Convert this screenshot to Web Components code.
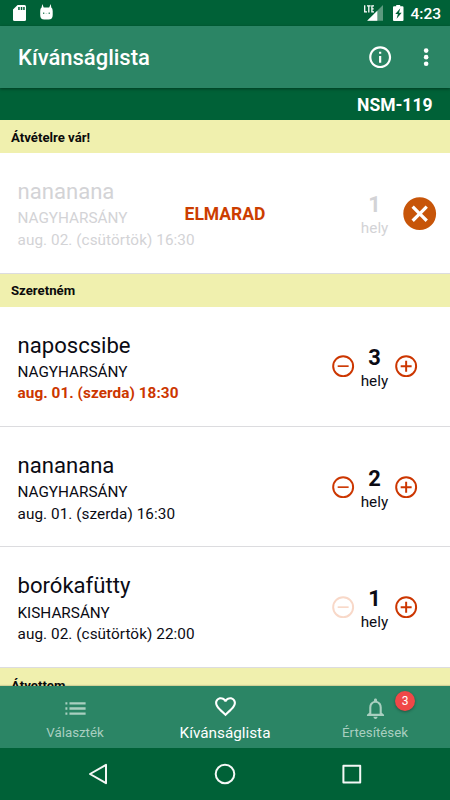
<!DOCTYPE html>
<html lang="hu">
<head>
<meta charset="utf-8">
<title>Kívánságlista</title>
<style>
html, body { margin: 0; height: 100%; }
body { font-family: Roboto, "Liberation Sans", sans-serif; background: #fff; color: #0b0b14; overflow: hidden; }
</style>
</head>
<body>
<wish-app></wish-app>
<script>
const define = (name, html, setup) => {
  const tpl = document.createElement('template');
  tpl.innerHTML = html;
  customElements.define(name, class extends HTMLElement {
    connectedCallback() {
      if (this.shadowRoot) return;
      this.attachShadow({ mode: 'open' }).append(tpl.content.cloneNode(true));
      if (setup) setup(this, this.shadowRoot);
    }
  });
};

const ICONS = {
  info: '<path d="M12 22C6.480 22 2 17.520 2 12S6.480 2 12 2s10 4.480 10 10-4.480 10-10 10m0-18c-4.410 0-8 3.590-8 8s3.590 8 8 8 8-3.590 8-8-3.590-8-8-8M11 7h2v2h-2zM11 11h2v6h-2z"/>',
  more: '<circle cx="12" cy="6" r="2.1"/><circle cx="12" cy="12" r="2.1"/><circle cx="12" cy="18" r="2.1"/>',
  minus: '<g fill="none" stroke="currentColor" stroke-width="1.8"><circle cx="12" cy="12" r="9.1"/><path stroke-width="1.5" d="M7 12h10"/></g>',
  plus: '<g fill="none" stroke="currentColor" stroke-width="1.8"><circle cx="12" cy="12" r="9.1"/><path d="M7 12h10M12 7v10"/></g>',
  cancel: '<path d="M12 2C6.47 2 2 6.47 2 12s4.47 10 10 10 10-4.47 10-10S17.53 2 12 2m5 13.59L15.59 17 12 13.41 8.41 17 7 15.59 10.59 12 7 8.41 8.41 7 12 10.59 15.59 7 17 8.41 13.41 12 17 15.59z"/>',
  list: '<path d="M2.300 6h1.900v2.200H2.300zM2.300 10.900h1.900v2.200H2.300zM2.300 15.800h1.900v2.200H2.300zM6.200 6H21.700v2.200H6.200zM6.200 10.900H21.700v2.200H6.200zM6.200 15.800H21.700v2.200H6.200z"/>',
  heart: '<path d="M12.1 18.55l-.1.1-.11-.1C7.140 14.240 4 11.390 4 8.500 4 6.500 5.500 5 7.500 5c1.540 0 3.040 1 3.570 2.360h1.860C13.460 6 14.960 5 16.500 5c2 0 3.500 1.500 3.500 3.500 0 2.890-3.140 5.740-7.900 10.050M16.500 3c-1.740 0-3.410.810-4.500 2.080C10.910 3.810 9.240 3 7.500 3 4.420 3 2 5.410 2 8.500c0 3.770 3.400 6.860 8.550 11.530L12 21.350l1.450-1.320C18.600 15.360 22 12.270 22 8.500 22 5.410 19.580 3 16.500 3z"/>',
  bell: '<path d="M12 22c1.100 0 2-.9 2-2h-4c0 1.100.9 2 2 2zm6-6v-5c0-3.070-1.630-5.640-4.500-6.320V4c0-.83-.67-1.500-1.500-1.500s-1.500.67-1.500 1.500v.68C7.640 5.360 6 7.920 6 11v5l-2.200 2v1.200h16.400V18l-2.200-2zm-2 1H8v-6c0-2.480 1.510-4.500 4-4.500s4 2.020 4 4.500v6z"/>'
};

define('ui-icon', `<style>
:host { display: block; width: var(--size, 26.3px); height: var(--size, 26.3px); flex: none; }
svg { display: block; width: 100%; height: 100%; fill: currentColor; }
</style><svg viewBox="0 0 24 24"></svg>`,
(el, root) => { root.querySelector('svg').innerHTML = ICONS[el.getAttribute('name')]; });

define('status-bar', `<style>
:host { display: flex; align-items: center; height: 26px; box-sizing: border-box; padding: 0 9px 0 13px; background: #006137; color: #fff; flex: none; }
svg { display: block; fill: currentColor; }
.sp { flex: 1; }
.cat { margin-left: 12.700px; }
.bat { margin-left: 8.500px; }
.time { margin-left: 6.500px; font-size: 15.500px; font-weight: 500; line-height: 26px; padding-top: 2px; }
</style>
<svg width="14" height="26" viewBox="0 0 14 26"><path d="M4.600 5H11.500Q13 5 13 6.500V19.500Q13 21 11.500 21H1.500Q0 21 0 19.500V9.600Z"/><path fill="#006137" d="M5.200 7h1.500v3H5.200zM7.800 7h1.500v3H7.800zM10.200 7h1.500v3H10.200z"/></svg>
<svg class="cat" width="13" height="26" viewBox="0 0 13 26"><path d="M2.300 4 3.700 7.400H9.200L10.700 4 11.300 7.600Q12.700 8.600 12.700 11V15Q12.700 19.500 8.500 19.500H4.300Q.2 19.500.2 15V11Q.2 8.600 1.600 7.600Z"/><path fill="#3f8a69" d="M3 12.600h1.300v1.300H3zM8.600 12.600h1.300v1.300H8.600z"/><path fill="#b5d3c6" d="M5.600 13.100h1.600v.7H5.600z"/></svg>
<div class="sp"></div>
<svg width="20" height="26" viewBox="0 0 20 26"><path fill="#5b9a7e" d="M19 5V20.700H3.200Z"/><path d="M13.300 10.700V20.700H3.200Z"/><path fill="#006137" d="M0 4H10.800V12.800H0z"/><path fill="none" stroke="#fff" stroke-width="1.300" d="M.7 5.300V11.900H3M3 5.900H6.600M4.800 5.900V12.500M10 5.900H7.900V11.900H10M7.900 8.900H9.700"/></svg>
<svg class="bat" width="11" height="26" viewBox="0 0 11 26"><path d="M3.200 5h4v1.200H9.500Q10.500 6.200 10.500 7.200V20Q10.500 21 9.500 21H1Q0 21 0 20V7.200Q0 6.200 1 6.200H3.200Z"/><path fill="#006137" d="M7.300 8.300 2.300 14H4.900L3.600 18.700 8.700 12.700H6Z"/></svg>
<div class="time">4:23</div>`);

define('app-bar', `<style>
:host { display: flex; align-items: center; height: 62px; box-sizing: border-box; padding: 0 11px 0 18px; background: #2b8565; color: #fff; flex: none; position: relative; z-index: 1; box-shadow: 0 1px 3px rgba(0,0,0,.4); }
h1 { margin: 0; flex: 1; font-size: 22px; font-weight: 500; line-height: 30px; padding-top: 2px; }
.more { margin-left: 19.500px; }
</style><h1><slot></slot></h1><ui-icon name="info"></ui-icon><ui-icon class="more" name="more"></ui-icon>`);

define('code-strip', `<style>
:host { display: flex; height: 32px; box-sizing: border-box; padding: 2px 17.500px 0 0; align-items: center; justify-content: flex-end; background: #006137; color: #fff; font-size: 17.5px; font-weight: 700; flex: none; }
</style><slot></slot>`);

define('list-header', `<style>
:host { display: flex; height: 33.3px; box-sizing: border-box; padding: 1.500px 11px 0; align-items: center; background: #f0f0ae; color: #0b0b0b; font-size: 13.200px; font-weight: 700; flex: none; }
</style><span><slot></slot></span>`);

define('wish-row', `<style>
:host { display: flex; height: 120.3px; box-sizing: border-box; border-bottom: 1px solid #dcdcdf; padding: 0 30.800px 0 17.500px; flex: none; background: #fff; position: relative; }
.text { flex: 1; padding-top: 24.700px; }
.name { font-size: 22.100px; line-height: 26px; margin-bottom: 4.400px; }
.line { font-size: 15.300px; line-height: 21.500px; white-space: nowrap; }
.date { letter-spacing: .065px; }
.qty { display: flex; align-items: center; }
.count { width: 37px; text-align: center; padding-top: 4.500px; }
.num { font-size: 21.9px; line-height: 25px; font-weight: 700; }
.hely { font-size: 15.300px; line-height: 22px; }
ui-icon { color: #cc3600; }
:host([min]) .minus { color: #f8d8c8; }
:host([soon]) .date { color: #cc3600; font-weight: 700; }
:host(:not([off])) .cancel, :host([off]) .plus, :host([off]) .minus { display: none; }
:host([off]) .text, :host([off]) .count { color: #d3d3d6; }
:host([off]) { padding-right: 10.500px; }
.cancel { --size: 39.400px; color: #c75509; margin-left: 7px; margin-top: 1.200px; }
.flag { position: absolute; left: 0; right: 0; top: 0; height: 121px; display: flex; align-items: center; justify-content: center; color: #cc3d00; font-size: 17.500px; font-weight: 700; }
:host(:not([off])) .flag { display: none; }
</style>
<div class="text"><div class="name"></div><div class="line city"></div><div class="line date"></div></div>
<div class="qty"><ui-icon class="minus" name="minus"></ui-icon><div class="count"><div class="num"></div><div class="hely">hely</div></div><ui-icon class="plus" name="plus"></ui-icon><ui-icon class="cancel" name="cancel"></ui-icon></div>
<div class="flag"></div>`,
(el, root) => {
  for (const k of ['name', 'city', 'date', 'num', 'flag']) root.querySelector('.' + k).textContent = el.getAttribute(k) || '';
  if (!el.hasAttribute('flag')) root.querySelector('.flag').remove();
});

define('nav-tab', `<style>
:host { flex: 1; display: flex; flex-direction: column; align-items: center; box-sizing: border-box; padding-top: 9.500px; font-size: 13.300px; color: #a9cfc0; position: relative; }
:host([active]) { color: #fff; font-size: 15.300px; padding-top: 7.500px; }
.label { line-height: 20px; margin-top: 2px; }
:host([active]) .label { margin-top: 4px; }
ui-icon { --size: 25px; }
.badge { position: absolute; left: 95px; top: 5px; width: 20px; height: 20px; border-radius: 50%; background: #f04848; color: #fff; font-size: 12px; line-height: 20px; text-align: center; box-shadow: 0 1px 3px rgba(0,0,0,.35); }
</style><ui-icon></ui-icon><div class="label"><slot></slot></div>`,
(el, root) => {
  const old = root.querySelector('ui-icon');
  const icon = document.createElement('ui-icon');
  icon.setAttribute('name', el.getAttribute('icon'));
  old.replaceWith(icon);
  if (el.hasAttribute('badge')) {
    const b = document.createElement('div');
    b.className = 'badge';
    b.textContent = el.getAttribute('badge');
    root.append(b);
  }
});

define('tab-bar', `<style>
:host { display: flex; height: 62px; background: #2b8565; flex: none; box-shadow: 0 -1px 1px rgba(0,0,0,.12); position: relative; }
</style><slot></slot>`);

define('system-nav', `<style>
:host { display: flex; height: 52px; background: #006137; flex: none; justify-content: center; align-items: center; gap: 102.500px; }
svg { display: block; width: 24px; height: 24px; fill: none; stroke: #f4f8f6; stroke-width: 2; stroke-linejoin: round; }
</style>
<svg viewBox="0 0 24 24"><path d="M19 2.800V21.200L3 12Z"/></svg>
<svg viewBox="0 0 24 24"><circle cx="12" cy="12" r="9.300"/></svg>
<svg viewBox="0 0 24 24"><rect x="3.400" y="3.700" width="16.800" height="16.800"/></svg>`);

define('wish-app', `<style>
:host { display: flex; flex-direction: column; width: 450px; height: 800px; overflow: hidden; }
main { flex: 1; min-height: 0; overflow: hidden; display: flex; flex-direction: column; background: #fff; }
</style>
<status-bar></status-bar>
<app-bar>Kívánságlista</app-bar>
<code-strip>NSM-119</code-strip>
<main>
<list-header>Átvételre vár!</list-header>
<wish-row off name="nananana" city="NAGYHARSÁNY" date="aug. 02. (csütörtök) 16:30" num="1" flag="ELMARAD"></wish-row>
<list-header>Szeretném</list-header>
<wish-row soon name="naposcsibe" city="NAGYHARSÁNY" date="aug. 01. (szerda) 18:30" num="3"></wish-row>
<wish-row name="nananana" city="NAGYHARSÁNY" date="aug. 01. (szerda) 16:30" num="2"></wish-row>
<wish-row min name="borókafütty" city="KISHARSÁNY" date="aug. 02. (csütörtök) 22:00" num="1"></wish-row>
<list-header>Átvettem</list-header>
</main>
<tab-bar>
<nav-tab icon="list">Választék</nav-tab>
<nav-tab icon="heart" active>Kívánságlista</nav-tab>
<nav-tab icon="bell" badge="3">Értesítések</nav-tab>
</tab-bar>
<system-nav></system-nav>`);
</script>
</body>
</html>
